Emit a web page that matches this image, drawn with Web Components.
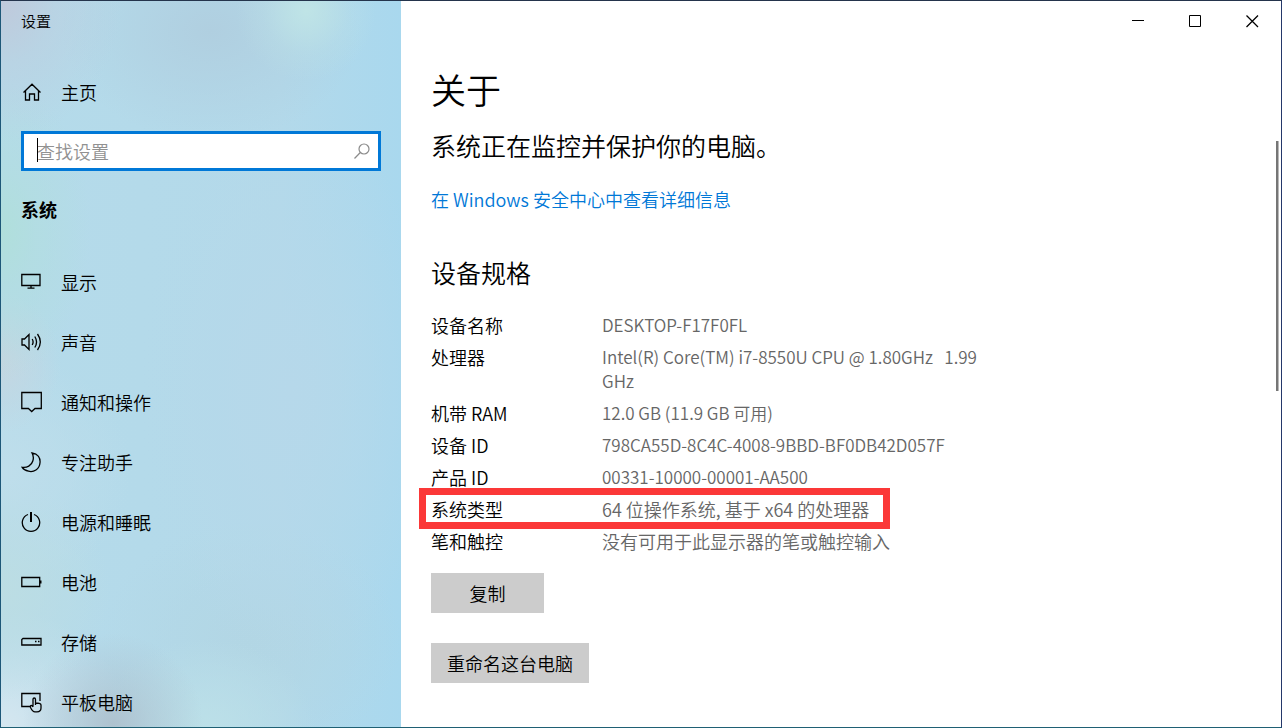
<!DOCTYPE html>
<html lang="zh-CN">
<head>
<meta charset="utf-8">
<meta name="viewport" content="width=device-width, initial-scale=1">
<title>设置</title>
<style>
  body {
    margin: 0;
    font: 18px/24px "Noto Sans CJK SC", "Noto Sans", sans-serif;
    font-weight: 350;
    color: #000;
    background: #fff;
  }
</style>
</head>
<body>
<settings-window>
  <settings-sidebar slot="side">
    <side-item slot="home" icon="home" href="#home">主页</side-item>
    <search-box slot="search" placeholder="查找设置"></search-box>
    <span slot="group">系统</span>
    <side-item icon="display" href="#display">显示</side-item>
    <side-item icon="sound" href="#sound">声音</side-item>
    <side-item icon="notify" href="#notifications">通知和操作</side-item>
    <side-item icon="focus" href="#focus">专注助手</side-item>
    <side-item icon="power" href="#power">电源和睡眠</side-item>
    <side-item icon="battery" href="#battery">电池</side-item>
    <side-item icon="storage" href="#storage">存储</side-item>
    <side-item icon="tablet" href="#tablet">平板电脑</side-item>
  </settings-sidebar>
  <caption-buttons slot="caption"></caption-buttons>
  <about-page></about-page>
</settings-window>

<script>
const define = (name, html, setup) => {
  const tpl = document.createElement('template');
  tpl.innerHTML = html;
  customElements.define(name, class extends HTMLElement {
    constructor() {
      super();
      this.attachShadow({ mode: 'open' }).append(tpl.content.cloneNode(true));
    }
    connectedCallback() { if (setup) setup(this, this.shadowRoot); }
  });
};

const icons = {
  home: '<path d="M2.5 11.500 L11 3.200 L19.500 11.500 M4.500 10 V19 H8.500 V13 H13.500 V19 H17.500 V10"/>',
  display: '<path d="M.8 3.500 H19 V14.500 H.8 Z M10 14.500 V17 M6.500 17.200 H13.500"/>',
  sound: '<path d="M1 8 H3.500 L8 3.500 V18.500 L3.500 14 H1 Z M11.200 8 Q13 11 11.200 14 M13.800 5.500 Q17.300 11 13.800 16.500 M16.500 3 Q22.200 11 16.500 19"/>',
  notify: '<path d="M.8 1.500 H20.300 V17.500 H14 L10.700 20.500 L7.400 17.500 H.8 Z"/>',
  focus: '<path d="M11 2 C17 2.800 19.500 7 19 11.800 C18.500 18.500 12.500 21.500 7.500 20.200 C4.500 19.500 2.500 18.500 1.200 16.300 C6 17 10.500 14.500 11.800 10 C12.800 7 12.200 4 11 2 Z"/>',
  power: '<path d="M7 3.500 A8.700 8.700 0 1 0 13 3.500"/><path stroke-width="2" d="M10 1 V11"/>',
  battery: '<path d="M.8 6.500 H18.700 V15.500 H.8 Z"/><path d="M19 9.500 H20.500 V12.500 H19 Z" fill="currentColor" stroke="none"/>',
  storage: '<path d="M2 7.500 H20 V14 H.8 V8.500 Z"/><path stroke-width="1.500" d="M14 10.500 H15.500 M17 10.500 H18.500"/>',
  tablet: '<path d="M10 15.500 H.8 V2.500 H19 V10"/><path d="M12 15.500 V8.500 Q12 7 13.200 7 Q14.500 7 14.500 8.500 V12 Q20 12 20 14 V17 Q20 20.800 16 20.800 H14 Q11.500 20.800 9.500 16.500 Q9 14.500 10.500 14.500 Q11.300 14.600 12 16 M14.500 12 V14"/>'
};

define('side-item', `
  <style>
    :host { display: block; }
    a { display: flex; align-items: center; gap: 18px; height: 60px; color: inherit; text-decoration: none; }
    svg { width: 22px; height: 22px; flex: none; fill: none; stroke: currentColor; stroke-width: 1.3; }
  </style>
  <a><svg viewBox="0 0 22 22" aria-hidden="true"></svg><span><slot></slot></span></a>
`, (host, root) => {
  root.querySelector('a').href = host.getAttribute('href');
  root.querySelector('svg').innerHTML = icons[host.getAttribute('icon')];
});

define('search-box', `
  <style>
    :host { display: block; }
    label { display: flex; align-items: center; position: relative; height: 34px; padding: 0 7px 0 13px; border: 3px solid #0078d7; background: #fff; }
    input { flex: 1; min-width: 0; padding: 0; border: 0; outline: 0; background: none; font: inherit; color: #000; caret-color: transparent; }
    input::placeholder { color: #919191; opacity: 1; }
    .caret { position: absolute; left: 13px; top: 4px; width: 1px; height: 24px; background: #000; }
    svg { width: 18px; height: 18px; fill: none; stroke: #8b8b8b; stroke-width: 1.2; }
  </style>
  <label>
    <input type="text" aria-label="查找设置">
    <span class="caret"></span>
    <svg viewBox="0 0 18 18" aria-hidden="true"><circle cx="11" cy="7" r="5"/><path d="M7.300 10.500 L1.500 16.500"/></svg>
  </label>
`, (host, root) => { root.querySelector('input').placeholder = host.getAttribute('placeholder'); });

define('settings-sidebar', `
  <style>
    :host {
      display: block; box-sizing: border-box; padding: 0 20px; overflow: hidden;
      background:
        radial-gradient(circle at 305px 10px, #bfe4e6 0, #bfe4e6aa 20px, #bfe4e644 42px, #bfe4e600 70px),
        radial-gradient(ellipse 120px 140px at 0 0, #bfc9db 0, #bfc9db66 45%, #bfc9db00),
        radial-gradient(ellipse 150px 110px at 210px 30px, #b0cfe0, #b0cfe000),
        radial-gradient(ellipse 90px 150px at 0 230px, #b0dfdb 0, #b0dfdb77 40%, #b0dfdb00),
        radial-gradient(ellipse 60px 70px at 0 362px, #c4d6e1, #c4d6e100),
        radial-gradient(ellipse 110px 110px at 0 590px, #bcdde3, #bcdde300),
        radial-gradient(ellipse 90px 90px at 112px 722px, #aec2cf 0, #aec2cf88 40%, #aec2cf00),
        radial-gradient(ellipse 130px 120px at 0 728px, #d6e7f0 0, #d6e7f088 45%, #d6e7f000),
        radial-gradient(ellipse 110px 90px at 205px 728px, #bce0e8, #bce0e800),
        radial-gradient(ellipse 130px 120px at 0 470px, #bfdeeb, #bfdeeb00),
        radial-gradient(ellipse 150px 280px at 290px 390px, #b6d8ea, #b6d8ea00),
        radial-gradient(ellipse 150px 120px at 250px 640px, #b2d6e4, #b2d6e400),
        linear-gradient(90deg, #b5dbea 0, #b3d9ea 70%, #a9d8ee 100%);
    }
    .title { font-size: 15px; line-height: 40px; }
    .home { margin-top: 21px; }
    .search { margin-top: 9px; }
    h2 { margin: 26px 0 31px; font-size: 18px; line-height: 24px; font-weight: 700; }
  </style>
  <div class="title">设置</div>
  <div class="home"><slot name="home"></slot></div>
  <div class="search"><slot name="search"></slot></div>
  <h2><slot name="group"></slot></h2>
  <nav><slot></slot></nav>
`);

define('caption-buttons', `
  <style>
    :host { display: flex; justify-content: flex-end; }
    button { width: 57px; height: 40px; padding: 0; border: 0; background: none; display: grid; place-items: center; color: #000; }
    svg { width: 13px; height: 13px; fill: none; stroke: currentColor; }
    .close { stroke-width: 1.3; }
  </style>
  <button aria-label="最小化"><svg viewBox="0 0 13 13"><path d="M0 5.500 H12"/></svg></button>
  <button aria-label="最大化"><svg viewBox="0 0 13 13"><path d="M.5 .5 H11.500 V11.500 H.5 Z"/></svg></button>
  <button aria-label="关闭"><svg class="close" viewBox="0 0 13 13"><path d="M.5 .5 L12 12 M12 .5 L.5 12"/></svg></button>
`);

define('push-button', `
  <style>
    :host { display: block; }
    button { display: block; min-width: 113px; height: 40px; padding: 0 16px; border: 0; background: #ccc; color: #000; font: inherit; }
  </style>
  <button type="button"><slot></slot></button>
`);

define('spec-table', `
  <style>
    :host { display: block; }
    table { width: 100%; max-width: 560px; border-spacing: 0; table-layout: fixed; }
    th, td { padding: 4px 0; vertical-align: top; text-align: left; font-weight: inherit; line-height: 24px; }
    th { width: 171px; }
    td { color: #666; white-space: pre-wrap; }
    .data { font-size: 17px; }
    .marked { position: relative; }
    .marked th::after { content: ""; position: absolute; box-sizing: border-box; left: -12px; top: -5px; width: 471px; height: 41px; border: 7px solid #fb3838; }
  </style>
  <table>
    <tr><th scope="row">设备名称</th><td class="data">DESKTOP-F17F0FL</td></tr>
    <tr><th scope="row">处理器</th><td class="data">Intel(R) Core(TM) i7-8550U CPU @ 1.80GHz   1.99 GHz</td></tr>
    <tr><th scope="row">机带 RAM</th><td class="data">12.0 GB (11.9 GB 可用)</td></tr>
    <tr><th scope="row">设备 ID</th><td class="data">798CA55D-8C4C-4008-9BBD-BF0DB42D057F</td></tr>
    <tr><th scope="row">产品 ID</th><td class="data">00331-10000-00001-AA500</td></tr>
    <tr class="marked"><th scope="row">系统类型</th><td>64 位操作系统, 基于 x64 的处理器</td></tr>
    <tr><th scope="row">笔和触控</th><td>没有可用于此显示器的笔或触控输入</td></tr>
  </table>
`);

define('about-page', `
  <style>
    :host { display: block; padding: 28px 30px; }
    h1 { margin: 0; font-size: 35px; line-height: 40px; font-weight: inherit; }
    h2 { margin: 0; font-size: 25px; line-height: 32px; font-weight: inherit; }
    .status { margin-top: 20px; }
    .more { margin: 26px 0 45px; }
    a { color: #0078d7; text-decoration: none; }
    spec-table { margin-top: 21px; }
    .actions { display: grid; gap: 30px; justify-items: start; margin-top: 16px; }
  </style>
  <h1>关于</h1>
  <h2 class="status">系统正在监控并保护你的电脑。</h2>
  <div class="more"><a href="#security">在 Windows 安全中心中查看详细信息</a></div>
  <h2>设备规格</h2>
  <spec-table></spec-table>
  <div class="actions">
    <push-button>复制</push-button>
    <push-button>重命名这台电脑</push-button>
  </div>
`);

define('settings-window', `
  <style>
    :host {
      display: grid; grid-template-columns: 400px minmax(0, 1fr); grid-template-rows: minmax(0, 1fr);
      box-sizing: border-box; height: 100vh; overflow: hidden;
      border: 1px solid; border-color: #24344c #24386a #1f6074 #1d5778;
    }
    main { position: relative; overflow: hidden; background: #fff; }
    .thumb { position: absolute; right: 2px; top: 140px; width: 2px; height: 250px; background: #767676; border-right: 1px solid #b9b9b9; }
    ::slotted([slot="side"]) { min-height: 0; }
  </style>
  <slot name="side"></slot>
  <main>
    <slot name="caption"></slot>
    <slot></slot>
    <div class="thumb"></div>
  </main>
`);
</script>
</body>
</html>
